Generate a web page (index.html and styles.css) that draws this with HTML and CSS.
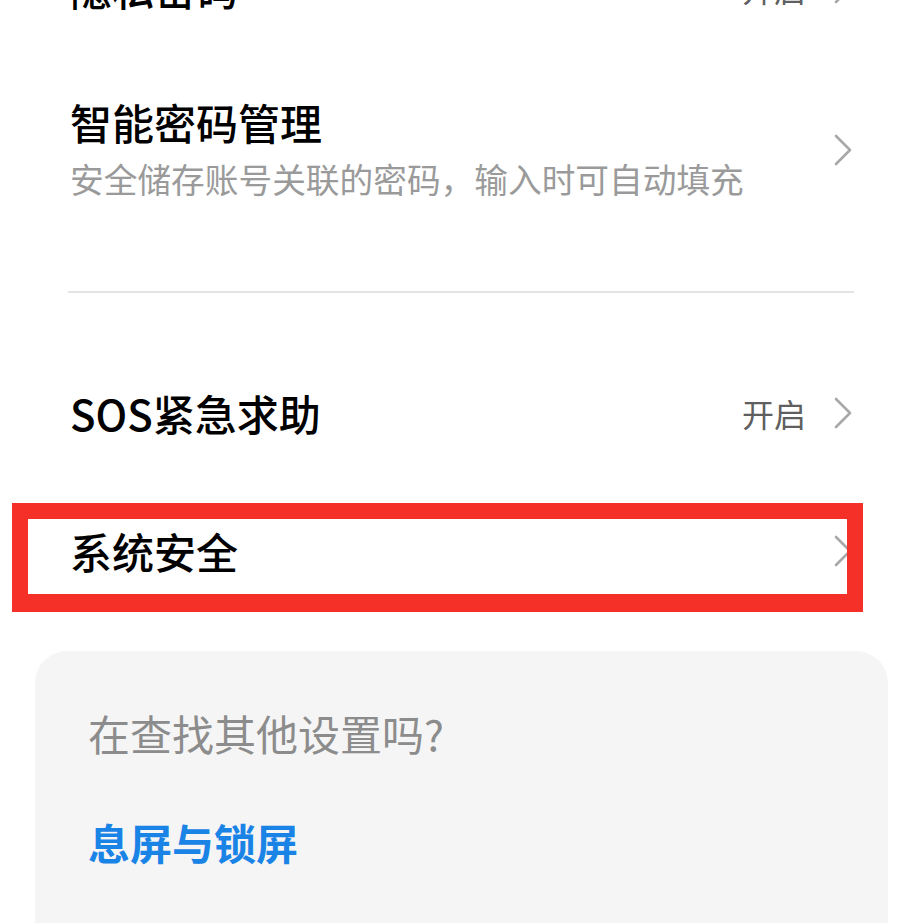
FILE: index.html
```html
<!DOCTYPE html>
<html>
<head>
    <title>安全设置</title>
    <link rel="stylesheet" href="styles.css">
</head>
<body>
    <div class="page">
        <div class="row row-top">
            <div class="title">隐私密码</div>
            <div class="right">
                <span class="value">开启</span>
                <svg class="chevron" viewBox="0 0 20 34"><polyline points="3,3 17,17 3,31"/></svg>
            </div>
        </div>

        <div class="row row-pass">
            <div>
                <div class="title">智能密码管理</div>
                <div class="sub">安全储存账号关联的密码，输入时可自动填充</div>
            </div>
            <div class="right">
                <svg class="chevron" viewBox="0 0 20 34"><polyline points="3,3 17,17 3,31"/></svg>
            </div>
        </div>

        <div class="divider"></div>

        <div class="row row-sos">
            <div class="title">SOS紧急求助</div>
            <div class="right">
                <span class="value">开启</span>
                <svg class="chevron" viewBox="0 0 20 34"><polyline points="3,3 17,17 3,31"/></svg>
            </div>
        </div>

        <div class="row row-sys">
            <div class="title">系统安全</div>
            <div class="right">
                <svg class="chevron" viewBox="0 0 20 34"><polyline points="3,3 17,17 3,31"/></svg>
            </div>
            <!-- highlight box drawn over the row -->
            <div class="mark"></div>
        </div>

        <div class="card">
            <div class="card-q">在查找其他设置吗?</div>
            <div class="card-link">息屏与锁屏</div>
        </div>
    </div>
</body>
</html>
```

FILE: styles.css
```css
body {
    margin: 0;
    padding: 0;
    background: #fff;
    font-family: "Noto Sans CJK SC", "Noto Sans", sans-serif;
    overflow: hidden;
}

.page {
    width: 923px;
    height: 973px;
    margin-top: -50px;
    overflow: hidden;
}

.row {
    display: flex;
    align-items: center;
    justify-content: space-between;
    padding: 0 70px 0 70px;
    position: relative;
}

.row-top { height: 76px; }
.row-pass { height: 248px; }
.row-sos { height: 140px; margin-top: 50px; }
.row-sys { height: 136px; }

.title {
    font-size: 42px;
    font-weight: 500;
    color: #000;
    line-height: 46px;
}

.sub {
    font-size: 33.7px;
    color: #9a9a9a;
    line-height: 44px;
    margin-top: 12px;
}

.right {
    display: flex;
    align-items: center;
}

.value {
    font-size: 32px;
    color: #5f5f5f;
    margin-right: 27px;
}

.chevron {
    width: 20px;
    height: 34px;
    fill: none;
    stroke: #a8a8a8;
    stroke-width: 2.6;
    stroke-linecap: round;
    stroke-linejoin: round;
}

.divider {
    height: 2px;
    background: #e4e4e4;
    margin: 17px 69px 0 68px;
}

.mark {
    position: absolute;
    left: 12px;
    top: 20px;
    width: 819px;
    height: 75px;
    border: 16px solid #f53029;
    border-bottom-width: 18px;
}

.card {
    margin: 32px 35px 0 35px;
    height: 320px;
    background: #f5f5f5;
    border-radius: 32px;
    padding: 59px 53px 0 53px;
}

.card-q {
    font-size: 42px;
    color: #8c8c8c;
    line-height: 46px;
}

.card-link {
    font-size: 42px;
    font-weight: 700;
    color: #1a84e6;
    line-height: 46px;
    margin-top: 63px;
}
```
